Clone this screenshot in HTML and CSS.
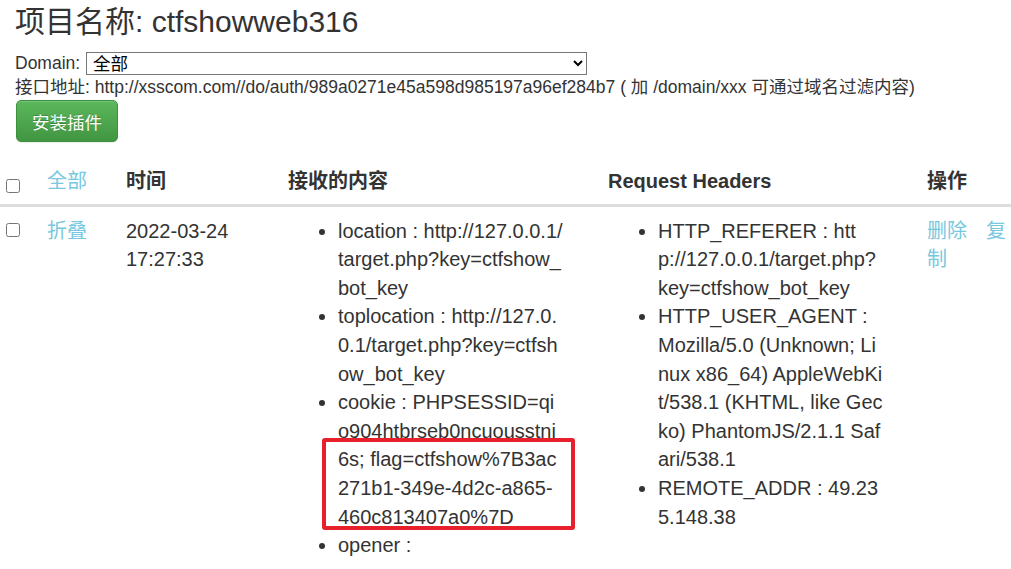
FILE: index.html
```html
<!DOCTYPE html>
<html lang="zh-CN">
<head>
<meta charset="utf-8">
<title>ctfshowweb316</title>
<link rel="stylesheet" href="styles.css">
</head>
<body>
<div class="top">
  <h1 class="title">项目名称: ctfshowweb316</h1>
  <div class="line">
    <label class="domain-label">Domain:</label>
    <select class="domain-select"><option>全部</option></select>
  </div>
  <div class="line">接口地址: http://xsscom.com//do/auth/989a0271e45a598d985197a96ef284b7 ( 加 /domain/xxx 可通过域名过滤内容)</div>
  <button class="btn-install">安装插件</button>
</div>
<table class="records">
  <colgroup>
    <col class="c-check"><col class="c-fold"><col class="c-time"><col class="c-content"><col class="c-headers"><col class="c-ops">
  </colgroup>
  <thead>
    <tr>
      <th class="cell-check"><input type="checkbox" class="chk"></th>
      <th><a class="link">全部</a></th>
      <th class="bold">时间</th>
      <th class="bold">接收的内容</th>
      <th class="bold">Request Headers</th>
      <th class="bold">操作</th>
    </tr>
  </thead>
  <tbody>
    <tr>
      <td class="cell-check"><input type="checkbox" class="chk"></td>
      <td><a class="link">折叠</a></td>
      <td>2022-03-24 17:27:33</td>
      <td>
        <ul class="kv">
          <li>location : http://127.0.0.1/target.php?key=ctfshow_bot_key</li>
          <li>toplocation : http://127.0.0.1/target.php?key=ctfshow_bot_key</li>
          <li>cookie : PHPSESSID=qio904htbrseb0ncuousstni6s; flag=ctfshow%7B3ac271b1-349e-4d2c-a865-460c813407a0%7D</li>
          <li>opener : </li>
        </ul>
      </td>
      <td>
        <ul class="kv">
          <li>HTTP_REFERER : http://127.0.0.1/target.php?key=ctfshow_bot_key</li>
          <li>HTTP_USER_AGENT : Mozilla/5.0 (Unknown; Linux x86_64) AppleWebKit/538.1 (KHTML, like Gecko) PhantomJS/2.1.1 Safari/538.1</li>
          <li>REMOTE_ADDR : 49.235.148.38</li>
        </ul>
      </td>
      <td class="ops"><a class="link">删除</a><a class="link op-copy">复制</a></td>
    </tr>
  </tbody>
</table>
<div class="highlight"></div>
</body>
</html>
```

FILE: styles.css
```css
html, body {
  margin: 0;
  padding: 0;
  overflow: hidden;
  background: #fff;
}
body {
  position: relative;
  font-family: "Liberation Sans", Arial, "Noto Sans CJK SC", sans-serif;
  color: #333;
  font-size: 17.5px;
  line-height: 25px;
}
.top {
  padding: 0 15px;
}
.title {
  margin: 5px 0 0;
  font-size: 30px;
  line-height: 33px;
  font-weight: normal;
  color: #333;
}
.line {
  height: 25px;
  white-space: nowrap;
}
.line:first-of-type {
  margin-top: 12px;
}
.domain-label {
  vertical-align: middle;
}
.domain-select {
  width: 501px;
  height: 23px;
  margin: 0 0 0 1px;
  vertical-align: middle;
  font-family: "Liberation Sans", "Noto Sans CJK SC", sans-serif;
  font-size: 17.5px;
  color: #000;
  background: #fff;
  border: 1px solid #767676;
  border-radius: 0;
  padding: 0 2px;
}
.btn-install {
  display: block;
  margin: 0 0 0 1px;
  width: 102px;
  height: 42px;
  padding: 0;
  font-family: "Liberation Sans", "Noto Sans CJK SC", sans-serif;
  font-size: 17.5px;
  color: #fff;
  background: linear-gradient(to bottom, #5cb85c 0%, #419641 100%);
  border: 1px solid #3e8f3e;
  border-radius: 5px;
  box-shadow: inset 0 1px 0 rgba(255,255,255,.15), 0 1px 1px rgba(0,0,0,.075);
  text-shadow: 0 -1px 0 rgba(0,0,0,.2);
}
.records {
  margin-top: 13px;
  width: 1011px;
  table-layout: fixed;
  border-collapse: collapse;
  font-size: 20px;
  line-height: 28.6px;
}
.c-check { width: 37px; }
.c-fold { width: 79px; }
.c-time { width: 162px; }
.c-content { width: 320px; }
.c-headers { width: 319px; }
.c-ops { width: 94px; }
.records th, .records td {
  padding: 10px;
  text-align: left;
}
.records th {
  vertical-align: bottom;
  border-bottom: 3px solid #dddddd;
  font-weight: normal;
  padding-top: 12px;
  padding-bottom: 8px;
}
.records td {
  vertical-align: top;
}
.records th.bold {
  font-weight: bold;
}
.records .cell-check {
  padding-left: 6px;
  padding-right: 0;
}
.chk {
  width: 14px;
  height: 14px;
  margin: 0;
  vertical-align: 1px;
}
thead .chk {
  vertical-align: -5px;
}
.link {
  color: #77c8e0;
  text-decoration: none;
  cursor: pointer;
}
.kv {
  margin: 0;
  padding: 0 0 0 50px;
  width: 225px;
  word-break: break-all;
}
.records td.ops {
  padding-right: 0;
  line-break: anywhere;
}
.op-copy {
  margin-left: 19px;
}
.highlight {
  position: absolute;
  left: 322px;
  top: 438px;
  width: 245px;
  height: 84px;
  border: 4px solid #e8202b;
  border-radius: 3px;
}
```
